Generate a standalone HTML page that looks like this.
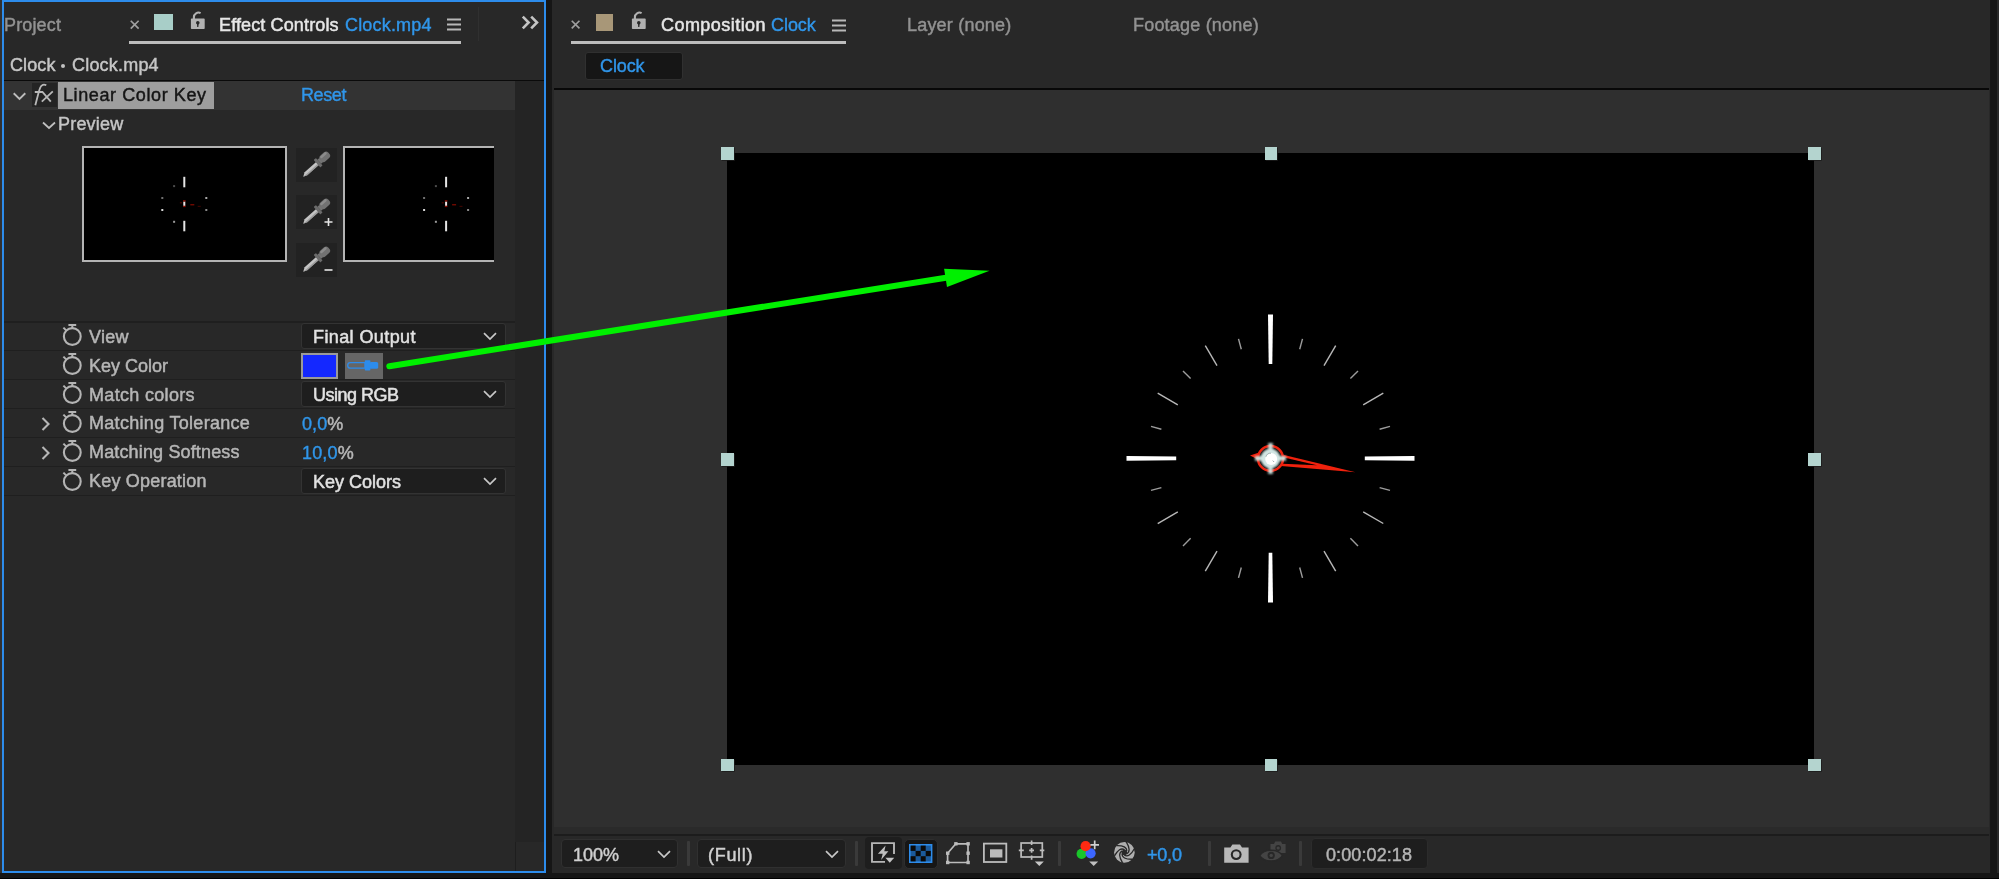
<!DOCTYPE html>
<html>
<head>
<meta charset="utf-8">
<title>After Effects - Linear Color Key</title>
<style>
*{margin:0;padding:0;box-sizing:border-box;}
html,body{width:1999px;height:879px;overflow:hidden;background:#161616;}
body{font-family:"Liberation Sans",sans-serif;font-size:18px;color:#c6c6c6;position:relative;}
.abs{position:absolute;}
.t{position:absolute;white-space:pre;line-height:20px;height:20px;font-size:18px;-webkit-text-stroke:0.45px currentColor;will-change:transform;}
.blue{color:#3096ea;}
.lab{color:#b6b6b6;-webkit-text-stroke:0.5px currentColor;}
.white{color:#e6e6e6;}
svg{position:absolute;overflow:visible;}
.dd{position:absolute;background:#1e1e1e;border:1px solid #333;border-radius:3px;}
.rowline{position:absolute;left:4px;width:511px;height:1.4px;background:#1f1f1f;}
.hdl{position:absolute;width:12.6px;height:12.6px;background:#b4d4cf;box-shadow:0.8px 0.8px 0 #1c1c1c;}
.vdiv{position:absolute;width:3px;height:25px;top:841px;background:#3a3a3a;border-radius:1px;}
.dim{color:#929292;-webkit-text-stroke:0.45px currentColor;}
.lab{color:#b6b6b6;-webkit-text-stroke:0.5px currentColor;}
.white{-webkit-text-stroke:0.5px currentColor;}
.blue{-webkit-text-stroke:0.4px currentColor;}
</style>
</head>
<body>
<!-- bottom strip -->
<div class="abs" style="left:0;top:873px;width:1999px;height:5px;background:#151515"></div>
<div class="abs" style="left:0;top:878px;width:1999px;height:1px;background:#000"></div>
<div class="abs" style="left:0;top:0;width:2px;height:873px;background:#32302f"></div>

<!-- LEFT PANEL -->
<div id="left" class="abs" style="left:1.7px;top:0;width:543.9px;height:872.6px;background:#282828;border:2px solid #2d8ceb;"></div>


<!-- left panel header -->
<div class="t dim" style="left:4px;top:14.5px;letter-spacing:0.15px">Project</div>
<svg style="left:129.5px;top:20px" width="9.4" height="9.4" viewBox="0 0 10 10"><path d="M0.8 0.8 L9.2 9.2 M9.2 0.8 L0.8 9.2" stroke="#a0a0a0" stroke-width="1.8" fill="none"/></svg>
<div class="abs" style="left:154.4px;top:13.7px;width:18.3px;height:16.6px;background:#a8cec8"></div>
<svg id="lock1" style="left:190px;top:11px" width="16" height="19" viewBox="0 0 16 19"><path d="M3.9 8.5 V6.3 A4.6 4.6 0 0 1 10.6 2.1" stroke="#b2b2b2" stroke-width="2.1" fill="none"/><rect x="0.9" y="7.6" width="13.8" height="10.5" rx="0.8" fill="#b2b2b2"/><circle cx="7.8" cy="11.8" r="1.8" fill="#282828"/><path d="M6.9 12 H8.7 L8.4 16 H7.2 Z" fill="#282828"/></svg>
<div class="t white" style="left:219px;top:14.5px;letter-spacing:0.13px">Effect Controls</div>
<div class="t blue" style="left:345px;top:14.5px;letter-spacing:0.18px">Clock.mp4</div>
<svg style="left:447px;top:18px" width="15" height="13" viewBox="0 0 15 13"><path d="M0 1.5 H14 M0 6.5 H14 M0 11.5 H14" stroke="#b8b8b8" stroke-width="1.9"/></svg>
<div class="abs" style="left:129px;top:41px;width:332px;height:3px;background:#bdbdbd"></div>
<div class="abs" style="left:478px;top:7px;width:1px;height:34px;background:#303030"></div>
<svg style="left:521px;top:15px" width="18" height="15" viewBox="0 0 18 15"><path d="M1.8 1.6 L7.6 7.5 L1.8 13.4 M10.2 1.6 L16 7.5 L10.2 13.4" stroke="#c4c4c4" stroke-width="2.6" fill="none"/></svg>

<div class="t" style="left:10px;top:55px;letter-spacing:0.1px">Clock</div><div class="abs" style="left:61.4px;top:64.2px;width:4px;height:4px;border-radius:50%;background:#c2c2c2"></div><div class="t" style="left:72px;top:55px;letter-spacing:0.2px">Clock.mp4</div>
<div class="abs" style="left:4px;top:79.7px;width:540px;height:1.5px;background:#0a0a0a"></div>

<!-- effect row -->
<div class="abs" style="left:4px;top:81px;width:511px;height:29px;background:#333333"></div>
<div class="abs" style="left:515px;top:81px;width:29px;height:761px;background:#242424"></div>
<div class="abs" style="left:515px;top:842px;width:1px;height:29px;background:#1e1e1e"></div>
<svg style="left:13px;top:92px" width="13" height="9" viewBox="0 0 13 9"><path d="M0.7 1.3 L6.5 6.9 L12.3 1.3" stroke="#bcbcbc" stroke-width="1.9" fill="none"/></svg>
<div class="abs" style="left:32px;top:83px;width:24.5px;height:24px;background:#242424"></div>
<svg style="left:0;top:0" width="70" height="112" viewBox="0 0 70 112"><path d="M46.3 85.3 C44 84.1 41.4 84.6 40.3 87.5 C39.5 89.5 39 91 38.5 93 L35.3 105.2 M34.8 92 H42.6 M42.2 91.6 L50.8 101.6 M52.8 91.3 L41.8 101.6" stroke="#b8b8b8" stroke-width="1.8" fill="none"/></svg>
<div class="abs" style="left:57.7px;top:82px;width:156.3px;height:26.6px;background:#9e9e9e"></div>
<div class="t" style="left:63px;top:85px;color:#161616;letter-spacing:0.6px">Linear Color Key</div>
<div class="t blue" style="left:301px;top:85px;letter-spacing:-0.4px">Reset</div>

<!-- preview -->
<svg style="left:42px;top:121px" width="14" height="9" viewBox="0 0 14 9"><path d="M1 1.5 L7 7 L13 1.5" stroke="#c0c0c0" stroke-width="1.7" fill="none"/></svg>
<div class="t" style="left:58px;top:114px;letter-spacing:0.2px">Preview</div>


<!-- preview boxes -->
<div class="abs" style="left:82px;top:146px;width:205px;height:116px;background:#000;border:2px solid #b4b4b4"></div>
<div class="abs" style="left:343px;top:146px;width:151px;height:116px;background:#000;border:2px solid #b4b4b4;border-right:none"></div>
<svg style="left:0;top:0" width="560" height="300" viewBox="0 0 560 300"><rect x="183.3" y="176.8" width="2" height="10.5" fill="#e4e4e4"/><rect x="183.3" y="220.8" width="2" height="10.5" fill="#e4e4e4"/><rect x="183.3" y="201.5" width="2" height="4.4" fill="#eee2e2"/><rect x="183.0" y="200.20000000000002" width="2.6" height="1.3" fill="#8a0c00"/><rect x="183.0" y="205.8" width="2.6" height="1.3" fill="#8a0c00"/><rect x="179.9" y="202.20000000000002" width="2" height="1.2" fill="#4a0600"/><rect x="190.3" y="204.10000000000002" width="4" height="1.3" fill="#7a0a00"/><rect x="197.70000000000002" y="205.8" width="3" height="1.2" fill="#3a0500"/><rect x="173.10000000000002" y="185.10000000000002" width="2" height="2" fill="#4c4c4c"/><rect x="161.3" y="197.0" width="2" height="2" fill="#707070"/><rect x="205.3" y="197.0" width="2" height="2" fill="#a8a8a8"/><rect x="161.3" y="209.0" width="2" height="2" fill="#d8d8d8"/><rect x="205.3" y="209.0" width="2" height="2" fill="#8a8a8a"/><rect x="173.10000000000002" y="220.8" width="2" height="2" fill="#9a9a9a"/><rect x="445.1" y="176.8" width="2" height="10.5" fill="#e4e4e4"/><rect x="445.1" y="220.8" width="2" height="10.5" fill="#e4e4e4"/><rect x="445.1" y="201.5" width="2" height="4.4" fill="#eee2e2"/><rect x="444.8" y="200.20000000000002" width="2.6" height="1.3" fill="#8a0c00"/><rect x="444.8" y="205.8" width="2.6" height="1.3" fill="#8a0c00"/><rect x="441.70000000000005" y="202.20000000000002" width="2" height="1.2" fill="#4a0600"/><rect x="452.1" y="204.10000000000002" width="4" height="1.3" fill="#7a0a00"/><rect x="459.5" y="205.8" width="3" height="1.2" fill="#3a0500"/><rect x="434.90000000000003" y="185.10000000000002" width="2" height="2" fill="#4c4c4c"/><rect x="423.1" y="197.0" width="2" height="2" fill="#707070"/><rect x="467.1" y="197.0" width="2" height="2" fill="#a8a8a8"/><rect x="423.1" y="209.0" width="2" height="2" fill="#d8d8d8"/><rect x="467.1" y="209.0" width="2" height="2" fill="#8a8a8a"/><rect x="434.90000000000003" y="220.8" width="2" height="2" fill="#9a9a9a"/></svg>
<div class="abs" style="left:296px;top:148px;width:41px;height:34px;background:#222"></div>
<div class="abs" style="left:296px;top:195px;width:41px;height:34px;background:#222"></div>
<div class="abs" style="left:296px;top:243px;width:41px;height:34px;background:#222"></div>
<svg style="left:296px;top:148px" width="41" height="34" viewBox="0 0 41 34"><g transform="translate(20.3,16.4) rotate(-42)"><path d="M-18 0.4 L-14 -1.9 L1.5 -1.9 L1.5 2.1 L-14 2.1 Z" fill="#c4c4c4"/><path d="M-18 0.4 L-14 0.6 L1.5 0.6 L1.5 2.1 L-14 2.1 Z" fill="#8a8a8a" opacity="0.7"/><rect x="1" y="-5" width="3" height="10" rx="0.6" fill="#6c6c6c"/><rect x="4" y="-2.8" width="2.6" height="5.6" fill="#747474"/><rect x="6" y="-3.8" width="10.8" height="7.6" rx="3" fill="#727272"/><rect x="7.5" y="-3.3" width="8" height="2.4" rx="1.2" fill="#8c8c8c"/></g></svg>
<svg style="left:296px;top:195px" width="41" height="34" viewBox="0 0 41 34"><g transform="translate(20.3,16.4) rotate(-42)"><path d="M-18 0.4 L-14 -1.9 L1.5 -1.9 L1.5 2.1 L-14 2.1 Z" fill="#c4c4c4"/><path d="M-18 0.4 L-14 0.6 L1.5 0.6 L1.5 2.1 L-14 2.1 Z" fill="#8a8a8a" opacity="0.7"/><rect x="1" y="-5" width="3" height="10" rx="0.6" fill="#6c6c6c"/><rect x="4" y="-2.8" width="2.6" height="5.6" fill="#747474"/><rect x="6" y="-3.8" width="10.8" height="7.6" rx="3" fill="#727272"/><rect x="7.5" y="-3.3" width="8" height="2.4" rx="1.2" fill="#8c8c8c"/></g><path d="M28.5 27 H36.5 M32.5 23 V31" stroke="#e6e6e6" stroke-width="1.6"/></svg>
<svg style="left:296px;top:243px" width="41" height="34" viewBox="0 0 41 34"><g transform="translate(20.3,16.4) rotate(-42)"><path d="M-18 0.4 L-14 -1.9 L1.5 -1.9 L1.5 2.1 L-14 2.1 Z" fill="#c4c4c4"/><path d="M-18 0.4 L-14 0.6 L1.5 0.6 L1.5 2.1 L-14 2.1 Z" fill="#8a8a8a" opacity="0.7"/><rect x="1" y="-5" width="3" height="10" rx="0.6" fill="#6c6c6c"/><rect x="4" y="-2.8" width="2.6" height="5.6" fill="#747474"/><rect x="6" y="-3.8" width="10.8" height="7.6" rx="3" fill="#727272"/><rect x="7.5" y="-3.3" width="8" height="2.4" rx="1.2" fill="#8c8c8c"/></g><path d="M28.5 27 H36.5" stroke="#e6e6e6" stroke-width="1.6"/></svg>

<!-- param rows -->
<div class="rowline" style="top:321.2px"></div>
<div class="rowline" style="top:350.1px"></div>
<div class="rowline" style="top:379.0px"></div>
<div class="rowline" style="top:407.9px"></div>
<div class="rowline" style="top:436.8px"></div>
<div class="rowline" style="top:465.7px"></div>
<div class="rowline" style="top:494.6px"></div>
<svg style="left:61px;top:323.4px" width="23" height="24" viewBox="0 0 23 24"><circle cx="11.3" cy="13.5" r="8.4" stroke="#b4b4b4" stroke-width="2.1" fill="none"/><path d="M7.4 1.9 H15.2 M11.3 1.9 V5.2 M2.4 4.6 L4.9 7.1" stroke="#b4b4b4" stroke-width="2"/></svg>
<div class="t lab" style="left:89px;top:326.7px;letter-spacing:0.3px">View</div>
<svg style="left:61px;top:352.3px" width="23" height="24" viewBox="0 0 23 24"><circle cx="11.3" cy="13.5" r="8.4" stroke="#b4b4b4" stroke-width="2.1" fill="none"/><path d="M7.4 1.9 H15.2 M11.3 1.9 V5.2 M2.4 4.6 L4.9 7.1" stroke="#b4b4b4" stroke-width="2"/></svg>
<div class="t lab" style="left:89px;top:355.6px;letter-spacing:0px">Key Color</div>
<svg style="left:61px;top:381.2px" width="23" height="24" viewBox="0 0 23 24"><circle cx="11.3" cy="13.5" r="8.4" stroke="#b4b4b4" stroke-width="2.1" fill="none"/><path d="M7.4 1.9 H15.2 M11.3 1.9 V5.2 M2.4 4.6 L4.9 7.1" stroke="#b4b4b4" stroke-width="2"/></svg>
<div class="t lab" style="left:89px;top:384.5px;letter-spacing:0.32px">Match colors</div>
<svg style="left:61px;top:410.1px" width="23" height="24" viewBox="0 0 23 24"><circle cx="11.3" cy="13.5" r="8.4" stroke="#b4b4b4" stroke-width="2.1" fill="none"/><path d="M7.4 1.9 H15.2 M11.3 1.9 V5.2 M2.4 4.6 L4.9 7.1" stroke="#b4b4b4" stroke-width="2"/></svg>
<div class="t lab" style="left:89px;top:413.4px;letter-spacing:0.3px">Matching Tolerance</div>
<svg style="left:61px;top:439.0px" width="23" height="24" viewBox="0 0 23 24"><circle cx="11.3" cy="13.5" r="8.4" stroke="#b4b4b4" stroke-width="2.1" fill="none"/><path d="M7.4 1.9 H15.2 M11.3 1.9 V5.2 M2.4 4.6 L4.9 7.1" stroke="#b4b4b4" stroke-width="2"/></svg>
<div class="t lab" style="left:89px;top:442.3px;letter-spacing:0.15px">Matching Softness</div>
<svg style="left:61px;top:467.9px" width="23" height="24" viewBox="0 0 23 24"><circle cx="11.3" cy="13.5" r="8.4" stroke="#b4b4b4" stroke-width="2.1" fill="none"/><path d="M7.4 1.9 H15.2 M11.3 1.9 V5.2 M2.4 4.6 L4.9 7.1" stroke="#b4b4b4" stroke-width="2"/></svg>
<div class="t lab" style="left:89px;top:471.2px;letter-spacing:0.2px">Key Operation</div>
<svg style="left:41px;top:417.0px" width="9" height="14" viewBox="0 0 9 14"><path d="M1.5 1 L7.5 7 L1.5 13" stroke="#b6b6b6" stroke-width="2.1" fill="none"/></svg>
<svg style="left:41px;top:446.0px" width="9" height="14" viewBox="0 0 9 14"><path d="M1.5 1 L7.5 7 L1.5 13" stroke="#b6b6b6" stroke-width="2.1" fill="none"/></svg>
<div class="dd" style="left:301px;top:323px;width:205px;height:26px"></div>
<div class="t white" style="left:313px;top:327px;letter-spacing:0.4px;color:#e2e2e2">Final Output</div>
<svg style="left:483px;top:331.8px" width="14" height="9" viewBox="0 0 14 9"><path d="M1 1.2 L7 7 L13 1.2" stroke="#c8c8c8" stroke-width="1.7" fill="none"/></svg>
<div class="dd" style="left:301px;top:381px;width:205px;height:26px"></div>
<div class="t white" style="left:313px;top:385px;letter-spacing:-0.5px;color:#e2e2e2">Using RGB</div>
<svg style="left:483px;top:389.8px" width="14" height="9" viewBox="0 0 14 9"><path d="M1 1.2 L7 7 L13 1.2" stroke="#c8c8c8" stroke-width="1.7" fill="none"/></svg>
<div class="dd" style="left:301px;top:468px;width:205px;height:26px"></div>
<div class="t white" style="left:313px;top:472px;letter-spacing:0px;color:#e2e2e2">Key Colors</div>
<svg style="left:483px;top:476.8px" width="14" height="9" viewBox="0 0 14 9"><path d="M1 1.2 L7 7 L13 1.2" stroke="#c8c8c8" stroke-width="1.7" fill="none"/></svg>
<div class="abs" style="left:301px;top:353px;width:37px;height:26px;background:#1428ff;border:2px solid #9a9a9a"></div>
<div class="abs" style="left:345px;top:353px;width:38px;height:26px;background:#666"></div>
<svg style="left:345px;top:353px" width="38" height="26" viewBox="0 0 38 26"><path d="M5.4 9.7 H20 V15.1 H5.4 A2.7 2.7 0 0 1 5.4 9.7 Z" stroke="#2d8ceb" stroke-width="1.3" fill="none"/><rect x="19.8" y="7.2" width="5.6" height="10.2" rx="0.7" fill="#2d8ceb"/><rect x="24.5" y="9" width="8.7" height="6.8" rx="1.6" fill="#2d8ceb"/></svg>
<div class="t lab" style="left:302.3px;top:413.6px;letter-spacing:0.1px"><span class="blue">0,0</span>%</div>
<div class="t lab" style="left:302.3px;top:442.5px;letter-spacing:0.15px"><span class="blue">10,0</span>%</div>

<!-- RIGHT PANEL -->
<div id="right" class="abs" style="left:551.7px;top:0;width:1438.5px;height:873px;background:#282828;"></div>
<div class="abs" style="left:1990.5px;top:0;width:6.5px;height:873px;background:#151515"></div><div class="abs" style="left:1997px;top:0;width:2px;height:873px;background:#282828"></div>


<!-- comp header -->
<svg style="left:570.5px;top:20.2px" width="9.2" height="9.2" viewBox="0 0 10 10"><path d="M0.8 0.8 L9.2 9.2 M9.2 0.8 L0.8 9.2" stroke="#a0a0a0" stroke-width="1.8" fill="none"/></svg>
<div class="abs" style="left:596px;top:14px;width:17px;height:17px;background:#a89778"></div>
<svg style="left:631px;top:11px" width="16" height="19" viewBox="0 0 16 19"><path d="M3.9 8.5 V6.3 A4.6 4.6 0 0 1 10.6 2.1" stroke="#b2b2b2" stroke-width="2.1" fill="none"/><rect x="0.9" y="7.6" width="13.8" height="10.5" rx="0.8" fill="#b2b2b2"/><circle cx="7.8" cy="11.8" r="1.8" fill="#282828"/><path d="M6.9 12 H8.7 L8.4 16 H7.2 Z" fill="#282828"/></svg>
<div class="t white" style="left:661px;top:14.5px;letter-spacing:0.45px">Composition</div>
<div class="t blue" style="left:770.8px;top:14.5px;letter-spacing:-0.05px">Clock</div>
<svg style="left:832px;top:18.5px" width="15" height="13" viewBox="0 0 15 13"><path d="M0 1.5 H14 M0 6.5 H14 M0 11.5 H14" stroke="#b8b8b8" stroke-width="1.9"/></svg>
<div class="abs" style="left:571px;top:41px;width:275px;height:3px;background:#bdbdbd"></div>
<div class="t dim" style="left:907px;top:14.5px;letter-spacing:0.2px">Layer (none)</div>
<div class="t dim" style="left:1133px;top:14.5px;letter-spacing:0.2px">Footage (none)</div>
<div class="abs" style="left:585.3px;top:52px;width:98px;height:28.3px;background:#161616;border:1px solid #303030;border-radius:3px"></div>
<div class="t blue" style="left:600.4px;top:56.2px;letter-spacing:-0.1px">Clock</div>
<div class="abs" style="left:553.6px;top:88.1px;width:1435.2px;height:1.8px;background:#080808"></div>
<!-- viewer -->
<div class="abs" style="left:553.6px;top:89.9px;width:1435.2px;height:737.1px;background:#2f2f2f"></div>
<div class="abs" style="left:553.6px;top:827px;width:1435.2px;height:7px;background:#2a2a2a"></div>
<div class="abs" style="left:553.6px;top:834px;width:1435.2px;height:2px;background:#1c1c1c"></div>
<div class="abs" style="left:727px;top:153px;width:1087px;height:611.5px;background:#000"></div>
<div class="hdl" style="left:721.4px;top:147.4px"></div>
<div class="hdl" style="left:1264.9px;top:147.4px"></div>
<div class="hdl" style="left:1808.4px;top:147.4px"></div>
<div class="hdl" style="left:721.4px;top:453.4px"></div>
<div class="hdl" style="left:1808.4px;top:453.4px"></div>
<div class="hdl" style="left:721.4px;top:758.9px"></div>
<div class="hdl" style="left:1264.9px;top:758.9px"></div>
<div class="hdl" style="left:1808.4px;top:758.9px"></div>
<svg id="clock" style="left:0;top:0" width="1999" height="879" viewBox="0 0 1999 879">
<defs><filter id="gl" x="-50%" y="-50%" width="200%" height="200%"><feGaussianBlur stdDeviation="1.1"/></filter><filter id="gl2" x="-50%" y="-50%" width="200%" height="200%"><feGaussianBlur stdDeviation="0.5"/></filter></defs>
<polygon points="1268.7,364.1 1268.0,314.4 1273.0,314.4 1272.3,364.1" fill="#ffffff"/>
<line x1="1299.7" y1="349.3" x2="1302.5" y2="338.9" stroke="#9c9c9c" stroke-width="1.4"/>
<line x1="1324.0" y1="365.7" x2="1335.7" y2="345.6" stroke="#b8b8b8" stroke-width="1.4"/>
<line x1="1350.4" y1="378.5" x2="1358.0" y2="370.9" stroke="#9c9c9c" stroke-width="1.4"/>
<line x1="1363.2" y1="404.9" x2="1383.3" y2="393.2" stroke="#b8b8b8" stroke-width="1.4"/>
<line x1="1379.6" y1="429.2" x2="1390.0" y2="426.4" stroke="#9c9c9c" stroke-width="1.4"/>
<polygon points="1364.8,456.6 1414.5,455.9 1414.5,460.8 1364.8,460.2" fill="#ffffff"/>
<line x1="1379.6" y1="487.6" x2="1390.0" y2="490.4" stroke="#9c9c9c" stroke-width="1.4"/>
<line x1="1363.2" y1="511.9" x2="1383.3" y2="523.5" stroke="#b8b8b8" stroke-width="1.4"/>
<line x1="1350.4" y1="538.3" x2="1358.0" y2="545.9" stroke="#9c9c9c" stroke-width="1.4"/>
<line x1="1324.0" y1="551.1" x2="1335.7" y2="571.2" stroke="#b8b8b8" stroke-width="1.4"/>
<line x1="1299.7" y1="567.5" x2="1302.5" y2="577.9" stroke="#9c9c9c" stroke-width="1.4"/>
<polygon points="1272.3,552.7 1273.0,602.4 1268.0,602.4 1268.7,552.7" fill="#ffffff"/>
<line x1="1241.3" y1="567.5" x2="1238.5" y2="577.9" stroke="#9c9c9c" stroke-width="1.4"/>
<line x1="1217.0" y1="551.1" x2="1205.3" y2="571.2" stroke="#b8b8b8" stroke-width="1.4"/>
<line x1="1190.6" y1="538.3" x2="1183.0" y2="545.9" stroke="#9c9c9c" stroke-width="1.4"/>
<line x1="1177.8" y1="511.9" x2="1157.7" y2="523.6" stroke="#b8b8b8" stroke-width="1.4"/>
<line x1="1161.4" y1="487.6" x2="1151.0" y2="490.4" stroke="#9c9c9c" stroke-width="1.4"/>
<polygon points="1176.2,460.2 1126.5,460.8 1126.5,455.9 1176.2,456.6" fill="#ffffff"/>
<line x1="1161.4" y1="429.2" x2="1151.0" y2="426.4" stroke="#9c9c9c" stroke-width="1.4"/>
<line x1="1177.8" y1="404.9" x2="1157.7" y2="393.2" stroke="#b8b8b8" stroke-width="1.4"/>
<line x1="1190.6" y1="378.5" x2="1183.0" y2="370.9" stroke="#9c9c9c" stroke-width="1.4"/>
<line x1="1217.0" y1="365.7" x2="1205.3" y2="345.6" stroke="#b8b8b8" stroke-width="1.4"/>
<line x1="1241.3" y1="349.3" x2="1238.5" y2="338.9" stroke="#9c9c9c" stroke-width="1.4"/>
<g filter="url(#gl2)">
<path d="M1250 455.6 L1259 452.6 L1259 460 Z" fill="#f0200c"/>
<path d="M1283 454.8 L1355.5 472.2 L1281 466 Z" fill="#f0200c"/>
<path d="M1284 457.4 L1317 465.3 L1283 463.7 Z" fill="#000"/>
<circle cx="1270.5" cy="458.4" r="12.5" fill="#000" stroke="#f0200c" stroke-width="2.5"/>
</g>
<g filter="url(#gl)"><path d="M1270.5 442.9 V473.9 M1255.0 458.4 H1286.0" stroke="#cfe6e3" stroke-width="4.6" opacity="0.95"/><circle cx="1270.5" cy="458.4" r="9.9" fill="#d2e6e4"/></g>
<circle cx="1271.2" cy="459.09999999999997" r="6" fill="#ffffff" filter="url(#gl2)"/>
<path d="M1265.9 456.79999999999995 A5 5 0 0 1 1271.0 453.2" stroke="#8c9a9a" stroke-width="0.9" fill="none" opacity="0.8"/>
<path d="M1272.7 460.59999999999997 L1274.1 462.0" stroke="#8c9a9a" stroke-width="1" fill="none" opacity="0.8"/>
<line x1="389.3" y1="366.2" x2="947.5" y2="277.5" stroke="#00f000" stroke-width="6" stroke-linecap="round"/>
<path d="M989.5 270.8 L947.0 286.9 L944.1 268.7 Z" fill="#00f000"/>
</svg>
<!-- BOTTOM BAR -->
<div class="dd" style="left:561px;top:839px;width:117px;height:29px;border-color:#303030;border-radius:4px"></div>
<div class="t" style="left:573px;top:844.5px;color:#d0d0d0">100%</div>
<svg style="left:656.5px;top:850px" width="14" height="9" viewBox="0 0 14 9"><path d="M1 1.2 L7 7 L13 1.2" stroke="#c8c8c8" stroke-width="1.7" fill="none"/></svg>
<div class="vdiv" style="left:686.5px"></div>
<div class="dd" style="left:697px;top:839px;width:149px;height:29px;border-color:#303030;border-radius:4px"></div>
<div class="t" style="left:708px;top:844.5px;color:#d0d0d0;letter-spacing:0.7px">(Full)</div>
<svg style="left:824.5px;top:850px" width="14" height="9" viewBox="0 0 14 9"><path d="M1 1.2 L7 7 L13 1.2" stroke="#c8c8c8" stroke-width="1.7" fill="none"/></svg>
<div class="vdiv" style="left:854.5px"></div>

<!-- fast preview -->
<div class="abs" style="left:865px;top:837px;width:37px;height:32px;background:#1e1e1e;border-radius:4px"></div>
<svg style="left:865px;top:837px" width="37" height="32" viewBox="0 0 37 32">
<path d="M20 24.9 H7 V6.1 H29 V17.1" stroke="#b6b6b6" stroke-width="1.9" fill="none"/>
<path d="M20.6 8.5 L12.9 16.8 H17.7 L16.1 23 L23.4 14.2 H19.3 Z" fill="#bebebe"/>
<path d="M20.4 20.8 H29.2 L24.8 25.8 Z" fill="#c4c4c4"/>
</svg>
<!-- transparency grid -->
<div class="abs" style="left:903.5px;top:838.5px;width:34.5px;height:30px;background:#161616;border-radius:5px;border:1px solid #2e2e2e"></div>
<svg style="left:904px;top:839px" width="34" height="29" viewBox="0 0 34 29">
<rect x="5.8" y="5.8" width="21.8" height="17.4" fill="#1b5a9b" stroke="#2d8ceb" stroke-width="1.6"/>
<g fill="#0a0a0a">
<rect x="6.6" y="6.6" width="5" height="5.3"/><rect x="16.7" y="6.6" width="5" height="5.3"/>
<rect x="11.6" y="11.9" width="5.1" height="5.3"/><rect x="21.7" y="11.9" width="5.1" height="5.3"/>
<rect x="6.6" y="17.2" width="5" height="5.2"/><rect x="16.7" y="17.2" width="5" height="5.2"/>
</g>
</svg>
<!-- mask/shape path -->
<svg style="left:944px;top:840px" width="28" height="26" viewBox="0 0 28 26">
<path d="M3.6 22.5 V13.2 L11.8 3.8 H24 V22.5 Z" stroke="#bcbcbc" stroke-width="1.7" fill="none"/>
<g fill="#bcbcbc"><rect x="2" y="20.8" width="3.4" height="3.4"/><rect x="2" y="11.5" width="3.4" height="3.4"/><rect x="10.2" y="2.1" width="3.4" height="3.4"/><rect x="22.4" y="2.1" width="3.4" height="3.4"/><rect x="22.4" y="11.5" width="3.4" height="3.4"/><rect x="22.4" y="20.8" width="3.4" height="3.4"/></g>
</svg>
<!-- region of interest -->
<svg style="left:982px;top:841px" width="27" height="24" viewBox="0 0 27 24">
<rect x="1.9" y="2.6" width="22.4" height="18.4" stroke="#bcbcbc" stroke-width="1.8" fill="none"/>
<rect x="8" y="8.3" width="12.4" height="8.2" fill="#bcbcbc"/>
</svg>
<!-- grid & guides -->
<svg style="left:1017px;top:839px" width="30" height="29" viewBox="0 0 30 29">
<rect x="4.1" y="4" width="21.2" height="14" stroke="#bcbcbc" stroke-width="1.7" fill="none"/>
<path d="M14.6 1.4 V6 M14.6 16.6 V20.8 M1.8 11.3 H6.8 M22.8 11.3 H27.3 M14.6 8.9 V13.7 M12.2 11.3 H17" stroke="#bcbcbc" stroke-width="1.7"/>
<path d="M17.8 22.4 H26.8 L22.3 26.9 Z" fill="#c8c8c8"/>
</svg>
<div class="vdiv" style="left:1058px"></div>
<!-- channels -->
<svg style="left:1074px;top:838px" width="28" height="30" viewBox="0 0 28 30">
<circle cx="7.6" cy="15.8" r="5.1" fill="#19c62a"/>
<circle cx="16.6" cy="15.3" r="5.1" fill="#3c66ff"/>
<circle cx="11.6" cy="8.2" r="5.1" fill="#ff2a12"/>
<path d="M16.4 6.8 H25 M20.7 2.4 V11.2" stroke="#d0d0d0" stroke-width="1.7"/>
<path d="M15.2 23.4 H24.2 L19.7 28 Z" fill="#c0c0c0"/>
</svg>
<!-- exposure aperture -->
<svg style="left:1113px;top:841px" width="23" height="23" viewBox="0 0 23 23">
<circle cx="11.4" cy="11.4" r="10.3" fill="#aeaeae"/>
<g stroke="#282828" stroke-width="1.3" fill="none" transform="translate(11.4 11.4)"><path d="M9.96 -3.63 Q4.89 5.82 -0.23 2.59"/><path d="M8.12 6.81 Q-2.60 7.14 -2.36 1.10"/><path d="M-1.84 10.44 Q-7.48 1.32 -2.13 -1.49"/><path d="M-9.96 3.63 Q-4.89 -5.82 0.23 -2.59"/><path d="M-8.12 -6.81 Q2.60 -7.14 2.36 -1.10"/><path d="M1.84 -10.44 Q7.48 -1.32 2.13 1.49"/></g>
<circle cx="11.4" cy="11.4" r="2.7" fill="#282828"/>
</svg>
<div class="t blue" style="left:1146.7px;top:844.5px;letter-spacing:-0.2px;-webkit-text-stroke:0.45px currentColor">+0,0</div>
<div class="vdiv" style="left:1207.5px"></div>
<!-- camera -->
<svg style="left:1223px;top:843px" width="27" height="21" viewBox="0 0 27 21">
<path d="M1.2 4.6 H7.4 L9.4 1.4 H17 L19 4.6 H25.6 V19.8 H1.2 Z" fill="#b8b8b8"/>
<circle cx="13.2" cy="11.6" r="5.4" fill="#282828"/><circle cx="13.2" cy="11.6" r="3.3" fill="#b8b8b8"/>
</svg>
<!-- show snapshot (disabled) -->
<svg style="left:1259px;top:840px" width="29" height="25" viewBox="0 0 29 25">
<path d="M11.5 4 H15 L16.2 1.6 H22 L23.2 4 H26.6 V13 H11.5 Z" fill="#444"/>
<circle cx="19.2" cy="8" r="2.9" fill="#282828"/><circle cx="19.2" cy="8" r="1.6" fill="#444"/>
<path d="M0.8 15.6 C5 8.4 19 8.4 23.4 15.6 C19 22.8 5 22.8 0.8 15.6 Z" fill="#444" stroke="#282828" stroke-width="1.4"/>
<circle cx="12.2" cy="15.4" r="3.6" fill="#282828"/><circle cx="12.2" cy="15.4" r="1.7" fill="#444"/>
</svg>
<div class="vdiv" style="left:1299px"></div>
<div class="dd" style="left:1310.6px;top:838px;width:117px;height:30.5px;border-color:#2c2c2c;border-radius:4px"></div>
<div class="t" style="left:1325.5px;top:844.5px;letter-spacing:0.1px;color:#b4b4b4;-webkit-text-stroke:0.45px currentColor">0:00:02:18</div>

</body>
</html>
